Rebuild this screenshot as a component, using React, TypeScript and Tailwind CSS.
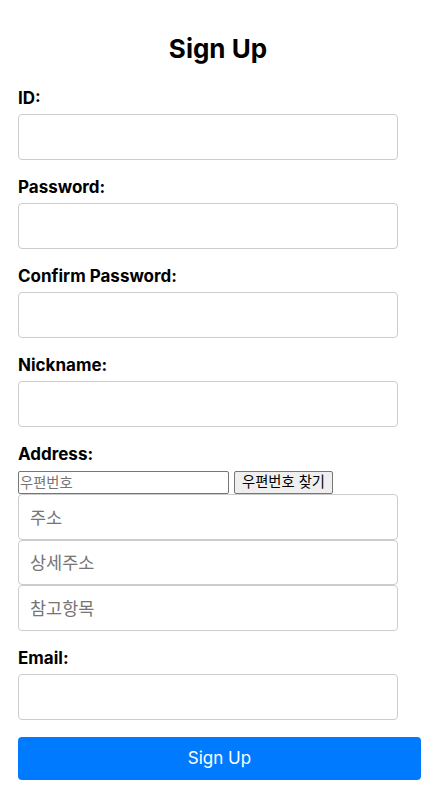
const font = "font-['Inter','Noto_Sans_CJK_KR',sans-serif]";

const Field = ({ label }: { label: string }) => (
  <div className="mb-[18px]">
    <label className="mb-[6px] block text-[17px] font-bold leading-[19px] text-black">{label}</label>
    <input
      type="text"
      className="box-border block h-[46px] w-[380px] rounded-[4px] border border-[#cccccc] px-[10px] text-[17.5px] outline-none"
    />
  </div>
);

const AddressInput = ({ placeholder, short }: { placeholder: string; short?: boolean }) => (
  <input
    type="text"
    placeholder={placeholder}
    className={`box-border block w-[380px] rounded-[4px] border border-[#cccccc] px-[11px] text-[17.5px] text-black outline-none placeholder:text-[#757575] ${short ? "h-[45px]" : "h-[46px]"}`}
  />
);

export default function App() {
  return (
    <div className={`min-h-[789px] w-[436px] bg-white ${font}`}>
      <div className="px-[18px] pt-[34px]">
        <h2 className="mb-[26px] text-center text-[26px] font-bold leading-[29px] text-black">Sign Up</h2>

        <Field label="ID:" />
        <Field label="Password:" />
        <Field label="Confirm Password:" />
        <Field label="Nickname:" />

        <div className="mb-[18px]">
          <label className="mb-[7px] block text-[17px] font-bold leading-[19px] text-black">Address:</label>
          <div className="flex items-center gap-[5px]">
            <input
              type="text"
              placeholder="우편번호"
              className="box-border h-[23px] w-[211px] rounded-[2px] border border-[#767676] px-[1px] text-[14.3px] outline-none placeholder:text-[#757575]"
            />
            <button className="box-border h-[23px] w-[99px] rounded-[2px] border border-[#767676] bg-[#efefef] text-[14.3px] leading-none text-black">
              우편번호 찾기
            </button>
          </div>
          <AddressInput placeholder="주소" />
          <AddressInput placeholder="상세주소" short />
          <AddressInput placeholder="참고항목" />
        </div>

        <Field label="Email:" />

        <button className="mt-[-1px] h-[43px] w-[403px] rounded-[4px] bg-[#007bff] text-[17px] text-white">Sign Up</button>
      </div>
    </div>
  );
}
